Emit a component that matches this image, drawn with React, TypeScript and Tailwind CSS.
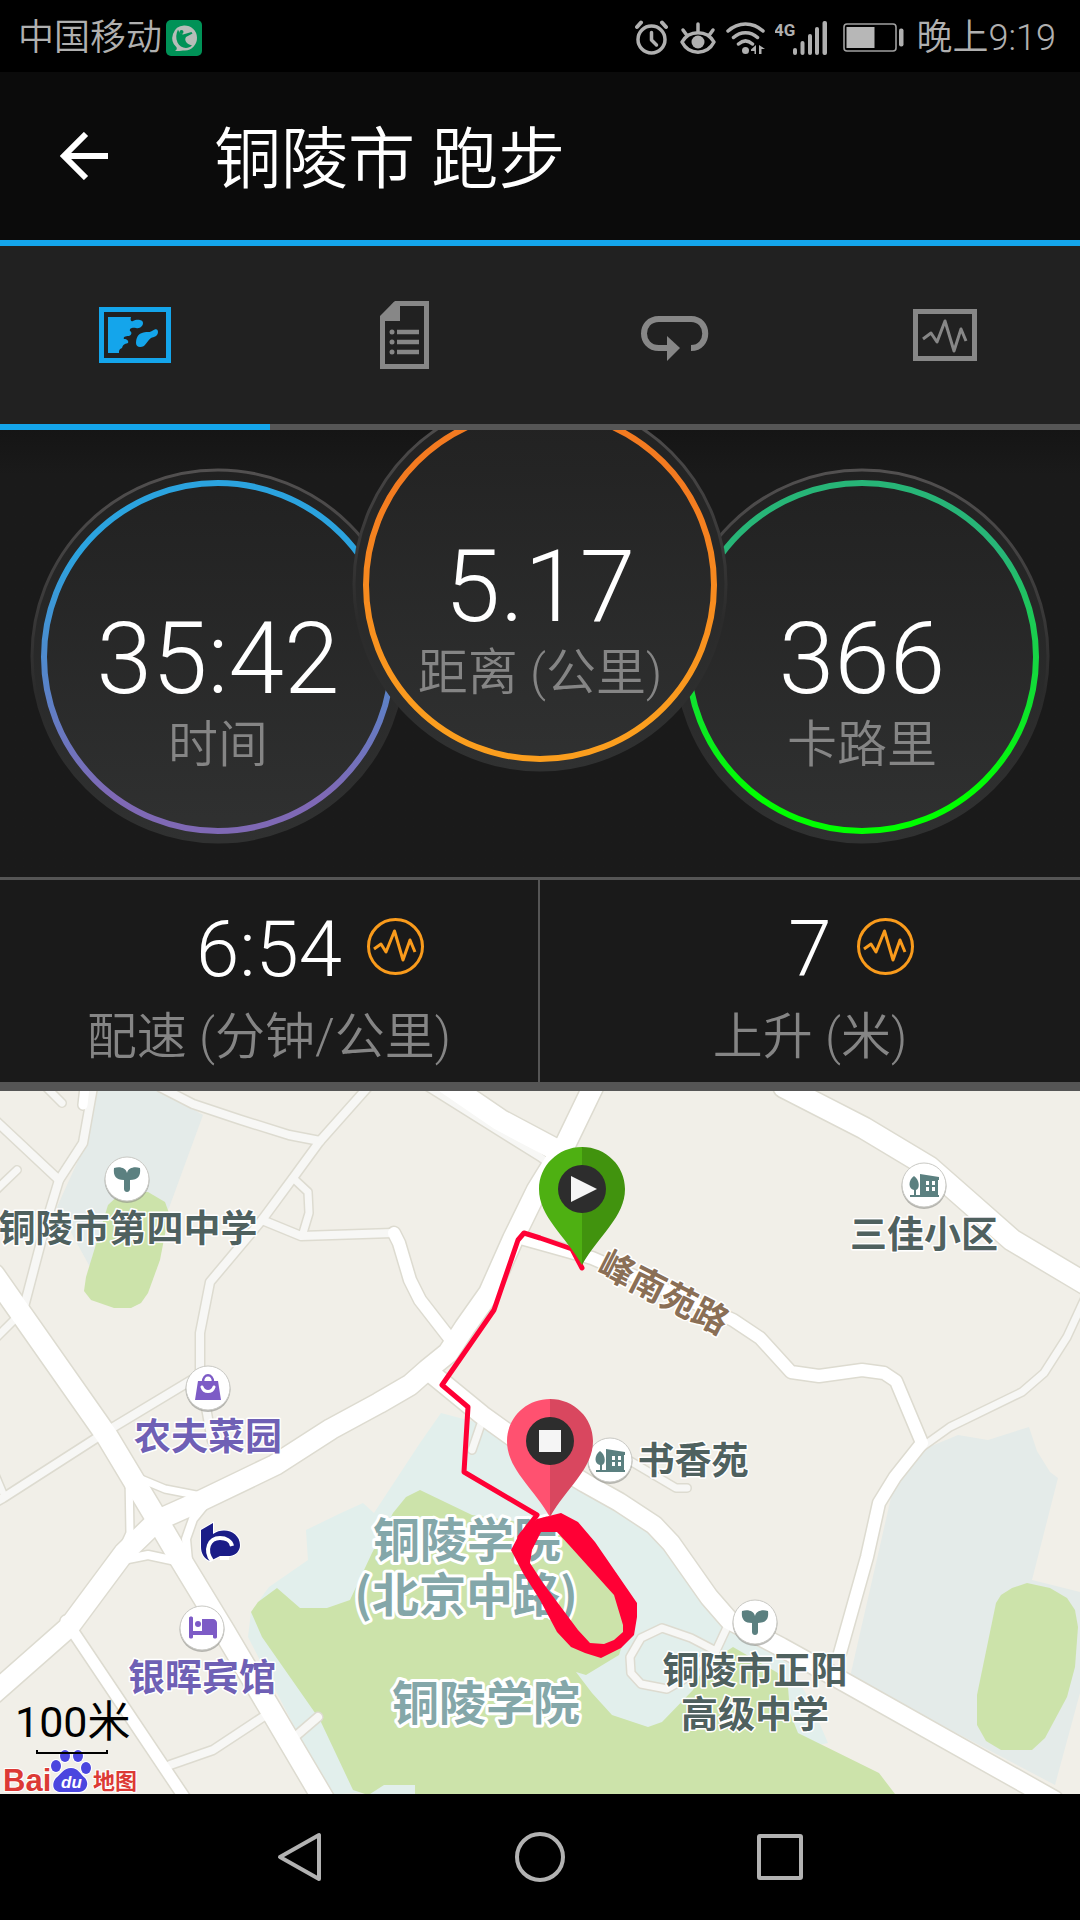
/**
 * Activity detail screen
 * Shows the totals of a run, its pace and ascent, and the route on a map
 */

import React from 'react';

/**
 * Props for a round gauge at the top of the summary
 */
interface GaugeProps {
  value: string;
  label: string;
  gradientId: string;
  from: string;
  to: string;
  className?: string;
}

/**
 * Props for a cell of the secondary stats row
 */
interface StatProps {
  value: string;
  label: string;
}

interface Road {
  points: string;
  width: number;
  minor?: boolean;
}

// Minor roads first, so that main roads are drawn over their ends
const ROADS: Road[] = [
  { points: '93,-4 83,52 59,89 46,132 24,216', width: 8, minor: true },
  { points: '-4,30 59,89', width: 8, minor: true },
  { points: '-6,101 17,79', width: 7, minor: true },
  { points: '44,-6 62,12', width: 7, minor: true },
  { points: '-4,247 18,225', width: 7, minor: true },
  { points: '160,-4 193,13 241,29 289,44 320,50', width: 8, minor: true },
  { points: '368,-4 320,50 293,87 262,129 210,191 200,242 200,285 207,322 212,350', width: 8, minor: true },
  { points: '293,87 308,101 309,122 303,142', width: 7, minor: true },
  { points: '262,129 301,145 393,142', width: 8, minor: true },
  { points: '200,284 112,337 3,407 -4,411', width: 8, minor: true },
  { points: '-4,385 4,404', width: 6, minor: true },
  { points: '1086,205 1067,246 1044,282 1022,301 950,336 922,356', width: 7, minor: true },
  { points: '620,364 676,397 687,397', width: 7, minor: true },
  { points: '729,532 715,562', width: 7, minor: true },
  { points: '716,560 691,547 662,537 641,547 630,566 631,582 641,593 667,598 688,586 704,566', width: 7, minor: true },
  { points: '482,330 472,359', width: 7, minor: true },
  { points: '170,674 213,659 266,624', width: 8, minor: true },
  { points: '290,650 318,626', width: 8, minor: true },
  { points: '428,-4 540,66 600,110', width: 7, minor: true },
  { points: '85,-4 83,14', width: 9 },
  { points: '141,388 165,398 196,404', width: 7 },
  { points: '129,385 130,442 122,460', width: 7 },
  { points: '206,412 193,428 186,448 188,470', width: 8 },
  { points: '128,468 148,464 176,470', width: 8 },
  { points: '394,142 399,152 410,189 420,209 451,249', width: 12 },
  { points: '66,530 117,606 186,709', width: 11 },
  {
    points:
      '517,146 560,158 592,167 643,189 695,212 733,229 760,247 791,281 819,285 862,279 884,282 896,290 922,352 895,386 879,412 867,466 840,562',
    width: 12,
  },
  { points: '784,-4 864,37 929,76 970,112 1012,149 1086,193', width: 21 },
  { points: '446,-8 500,29 566,64', width: 21 },
  { points: '427,279 482,324 535,362 585,392 619,411 654,434 671,452 709,506 729,529 781,556 846,592 1054,709', width: 18 },
  { points: '-6,184 107,345 152,420 179,466 224,540 275,626 324,709', width: 21 },
  {
    points:
      '594,-6 566,52 537,99 513,148 489,202 465,236 448,262 427,279 410,294 379,312 331,338 275,374 196,412 158,429 124,462 69,536 -6,602',
    width: 20,
  },
];

const TEXT_FONT = "font-['Roboto','Noto_Sans_CJK_SC',sans-serif]";

function StatusBar() {
  return (
    <div className="flex h-[72px] items-center justify-between bg-black pl-[18px] pr-6 pt-1 text-[36px] leading-none text-[#b0b0b0]">
      <div className="flex items-center gap-1">
        <span className="font-[350]">中国移动</span>
        <svg className="h-9 w-9" viewBox="0 0 36 36" aria-hidden="true">
          <rect width="36" height="36" rx="5" fill="#009257" />
          <path d="M18 5.500a12.500 12.500 0 0 1 1 25c-4 0-6 1-10 .3 2-1 2-2 1.500-3.500A12.500 12.500 0 0 1 18 5.500z" fill="#b7bdb9" />
          <path
            d="M12 9.500c1 3 3 4.500 5 5l8.500-2.500 1 1.500-6.500 3.500c-2 3 0 7 6 8.500-4 4-12 3-14.500-3-2-4-1.500-9 .5-13z"
            fill="#009257"
          />
          <circle cx="15.500" cy="12" r="2" fill="#009257" />
        </svg>
      </div>
      <div className="flex items-center gap-2.5">
        <svg className="h-9 w-9" viewBox="0 0 36 36" fill="none" stroke="#b0b0b0" strokeLinecap="round" strokeLinejoin="round" aria-hidden="true">
          <circle cx="17.500" cy="19.500" r="13.500" strokeWidth="3.500" />
          <path d="M17.500 12.500v7.500l5 5" strokeWidth="3.500" />
          <path d="M3 7l4-4.500M32 7l-4-4.500" strokeWidth="4" />
        </svg>
        <svg className="h-9 w-9" viewBox="0 0 36 36" fill="none" stroke="#b0b0b0" strokeLinecap="round" strokeLinejoin="round" aria-hidden="true">
          <path d="M2 22C9 9.500 27 9.500 34 22 27 35.500 9 35.500 2 22z" strokeWidth="3.500" />
          <circle cx="18" cy="22" r="6.500" fill="#b0b0b0" stroke="none" />
          <path d="M18 4v7M3 10l4 5.500M33 10l-4 5.500" strokeWidth="3.500" />
        </svg>
        <svg className="h-9 w-[39px]" viewBox="0 0 39 36" fill="none" stroke="#b0b0b0" strokeWidth="3.500" strokeLinecap="round" aria-hidden="true">
          <path d="M2 11C12 1.500 27 1.500 37 11M7.500 17.500c7-6.500 17-6.500 24 0M12.500 24c4.500-4 9.500-4 14 0" />
          <circle cx="19.500" cy="30.500" r="3.500" fill="#b0b0b0" stroke="none" />
          <path d="M30 25v9h-1.500v-3H25v-1.500zM33 25l6 4h-3.500v5H33z" fill="#b0b0b0" stroke="none" />
        </svg>
        <svg className="h-9 w-[58px]" viewBox="0 0 58 36" fill="#b0b0b0" aria-hidden="true">
          <text x="-1" y="16" fontSize="17" fontWeight="700">4G</text>
          <rect x="18" y="28" width="4" height="7" rx="2" />
          <rect x="25.500" y="21" width="4" height="14" rx="2" />
          <rect x="33" y="14" width="4" height="21" rx="2" />
          <rect x="40" y="7" width="4" height="28" rx="2" />
          <rect x="47.500" y="1" width="4.500" height="34" rx="2" />
        </svg>
        <svg className="h-9 w-16" viewBox="0 0 64 36" aria-hidden="true">
          <rect x="1" y="4" width="52" height="27" rx="3" fill="none" stroke="#a0a0a0" strokeWidth="1.600" />
          <rect x="3.500" y="7" width="28" height="21" fill="#b7b7b7" />
          <rect x="56" y="8.500" width="4.500" height="18" rx="2" fill="#b0b0b0" />
        </svg>
        <time className="font-[350]">晚上9:19</time>
      </div>
    </div>
  );
}

function Header() {
  return (
    <header className="flex h-[174px] items-center border-b-6 border-[#14a5eb] bg-[#0b0b0b] pl-[60px] text-white">
      <button type="button" aria-label="返回" className="h-12 w-12">
        <svg className="h-12 w-12" viewBox="0 0 48 48" fill="none" stroke="white" strokeWidth="6" aria-hidden="true">
          <path d="M48 24H4M26 2L4 24l22 22" />
        </svg>
      </button>
      <h1 className="ml-[106px] pt-2 text-[67px] font-[350] leading-none">铜陵市 跑步</h1>
    </header>
  );
}

function TabBar() {
  return (
    <nav className="grid h-[184px] grid-cols-4 bg-[#212121]">
      <button type="button" aria-label="地图" aria-current="page" className="flex items-center justify-center border-b-6 border-[#14a5eb]">
        <svg className="h-14 w-18" viewBox="0 0 72 56" aria-hidden="true">
          <rect x="2.500" y="2.500" width="67" height="51" fill="none" stroke="#14a5eb" strokeWidth="5" />
          <path
            d="M9 10h23c-1 3 0 5 2 4 3-2 10-2 10 2 0 3-3 6-7 5-3-1-7 0-6 3 2 1 2 4-1 5-4 0-6 1-5 3 3 0 5 2 4 4-4 1-5 2-6 5-3 1-3 3-3 5H9z"
            fill="#14a5eb"
          />
          <path d="M43 26c4-2 7 0 10-2 4-3 6-2 6 1 0 4-4 5-7 6-3 2-4 5-7 8-4 2-8 1-8-3 0-5 2-9 6-10z" fill="#14a5eb" />
        </svg>
      </button>
      <button type="button" aria-label="统计" className="flex items-center justify-center border-b-6 border-[#555555]">
        <svg className="h-17 w-[50px]" viewBox="0 0 50 68" aria-hidden="true">
          <path d="M16 2.500h30.500v63h-44V16z" fill="none" stroke="#878787" strokeWidth="5" />
          <path d="M14 1h6v19H1v-5z" fill="#878787" />
          <path d="M17 31h22M17 41h22M17 51h22" stroke="#878787" strokeWidth="4.500" />
          <g fill="#878787">
            <circle cx="12" cy="31" r="2.500" />
            <circle cx="12" cy="41" r="2.500" />
            <circle cx="12" cy="51" r="2.500" />
          </g>
        </svg>
      </button>
      <button type="button" aria-label="圈数" className="flex items-center justify-center border-b-6 border-[#555555]">
        <svg className="mt-1 h-12 w-17" viewBox="0 0 68 48" aria-hidden="true">
          <path d="M28 35H18C-2 35-2 6 18 6h32c19 0 19 29 0 29" fill="none" stroke="#878787" strokeWidth="6" />
          <path d="M26 23l13 12-13 13z" fill="#878787" />
        </svg>
      </button>
      <button type="button" aria-label="图表" className="flex items-center justify-center border-b-6 border-[#555555]">
        <svg className="h-13 w-16" viewBox="0 0 64 52" fill="none" stroke="#878787" aria-hidden="true">
          <rect x="2.500" y="2.500" width="59" height="47" strokeWidth="5" />
          <path d="M10 30l8-6 6 9 8-21 9 30 7-22 5 12" strokeWidth="3" strokeLinejoin="round" />
        </svg>
      </button>
    </nav>
  );
}

function Gauge({ value, label, gradientId, from, to, className = '' }: GaugeProps) {
  return (
    <div className={`relative grid h-[378px] w-[378px] shrink-0 place-items-center ${className}`}>
      <svg className="absolute inset-0 h-full w-full" viewBox="0 0 378 378" aria-hidden="true">
        <defs>
          <linearGradient id={gradientId} x1="0" y1="0" x2="0" y2="1">
            <stop offset="0.200" stopColor={from} />
            <stop offset="0.900" stopColor={to} />
          </linearGradient>
          <linearGradient id={`${gradientId}-face`} x1="0" y1="0" x2="0" y2="1">
            <stop offset="0" stopColor="#212121" />
            <stop offset="1" stopColor="#303131" />
          </linearGradient>
          <linearGradient id={`${gradientId}-rim`} x1="0" y1="0" x2="0" y2="1">
            <stop offset="0" stopColor="#525050" />
            <stop offset="0.600" stopColor="#2b2b2b" />
            <stop offset="1" stopColor="#303131" />
          </linearGradient>
        </defs>
        <circle cx="189" cy="189" r="186" fill={`url(#${gradientId}-face)`} stroke={`url(#${gradientId}-rim)`} strokeWidth="3" />
        <circle cx="189" cy="190" r="174" fill="none" stroke={`url(#${gradientId})`} strokeWidth="6" />
      </svg>
      <div className="relative flex flex-col items-center pt-[90px] font-[350]">
        <span className="text-[100px] leading-[88px] text-white">{value}</span>
        <span className="text-[50px] leading-[84px] text-[#858585]">{label}</span>
      </div>
    </div>
  );
}

function Stat({ value, label }: StatProps) {
  return (
    <div className="flex flex-col items-center pt-6 font-[350]">
      <div className="grid grid-cols-[1fr_auto_1fr] items-start gap-[25px]">
        <span />
        <span className="text-[78px] leading-[92px] text-white">{value}</span>
        <svg className="mt-3.5 h-[57px] w-[57px]" viewBox="0 0 57 57" fill="none" stroke="#f99b1c" aria-hidden="true">
          <circle cx="28.500" cy="28.500" r="27" strokeWidth="3" />
          <path d="M7 31l7-5 5 8 8.500-21 8.500 29 7-20 5 12" strokeWidth="3" strokeLinejoin="round" />
        </svg>
      </div>
      <span className="text-[50px] leading-[82px] text-[#858585]">{label}</span>
    </div>
  );
}

function Marker({ x, y, children }: { x: number; y: number; children: React.ReactNode }) {
  return (
    <g transform={`translate(${x} ${y})`}>
      <circle cy="1.500" r="22.500" fill="#8d8d88" opacity="0.600" />
      <circle r="22" fill="white" stroke="#c9c9c4" strokeWidth="1" />
      {children}
    </g>
  );
}

function SchoolMarker({ x, y }: { x: number; y: number }) {
  return (
    <Marker x={x} y={y}>
      <path d="M-13-11c6-2 12 0 13 5 1-5 7-7 13-5 1 8-2 12-10 12v9c0 4-6 4-6 0V1c-8 0-11-4-10-12z" fill="#5b8080" />
    </Marker>
  );
}

function EstateMarker({ x, y }: { x: number; y: number }) {
  return (
    <Marker x={x} y={y}>
      <path d="M-14 12v-2h4V5c-6-1-6-10 0-14 6 4 6 13 2 14v5h4v-21l19 3v3h-1v15h1v2z" fill="#5b8080" />
      <path d="M2-4h3v4H2zM8-4h3v4H8zM2 2h3v4H2zM8 2h3v4H8z" fill="white" />
    </Marker>
  );
}

function Pin({ x, y, light, dark, children }: { x: number; y: number; light: string; dark: string; children: React.ReactNode }) {
  return (
    <g transform={`translate(${x} ${y})`}>
      <path d="M0-118C-24-118-43-99-43-76-43-48-17-30 0 0z" fill={light} />
      <path d="M0-118C24-118 43-99 43-76 43-48 17-30 0 0z" fill={dark} />
      <circle cy="-76" r="24" fill="#2d2d2d" />
      {children}
    </g>
  );
}

function RouteMap() {
  return (
    <svg className="block w-full bg-[#f1efe8]" viewBox="0 0 1080 703" role="img" aria-label="路线地图">
      {/* Grounds and parks */}
      <path d="M96 0h66l41 24-34 93-79 59-33-60 29-64z" fill="#e4ebe9" />
      <path d="M108 114l14-13h26l17 10 4 11-9 47-12 33-7 10-10 5h-17l-23-8-7-9 2-14z" fill="#cce3aa" />
      <path d="M929 356l29-12 30 5 41-13 8 24 13 21 8 6-26 102 48 12v101l-25 92-205-108 45-197z" fill="#e4ebe9" />
      <path d="M996 512l5-8 11-7 15-5 23 5 17 10 8 12 3 17-3 40-8 30-22 41-13 12h-31l-15-9-9-16v-30z" fill="#cce3aa" />
      <path
        d="M441 322L490 335 585 395 619 414 654 437 709 510 729 532 790 574 810 610 828 652 700 680 340 703 334 703 296 639 248 546 251 521 269 496 308 469 306 439 341 422 363 412 374 422 420 352z"
        fill="#e2efec"
      />
      <path
        d="M420 399L472 424 555 436 600 480 630 530 619 564 586 584 576 581 592 602 612 624 648 636 662 631 693 599 704 575 733 556 778 582 788 596 790 622 798 642 879 682 895 703 365 703 353 699 320 629 262 546 251 521 258 511 277 497 300 517 327 517 350 509 372 462 393 422 406 406z"
        fill="#cce3aa"
      />
      <path d="M370 703l14-9h31v9z" fill="#e2efec" />

      {/* Roads: casings, then surfaces */}
      <g fill="none" stroke="#dddbd0" strokeLinejoin="round" strokeLinecap="round">
        {ROADS.map((road) => (
          <polyline key={road.points} points={road.points} strokeWidth={road.width + 3} />
        ))}
      </g>
      <g fill="none" strokeLinejoin="round" strokeLinecap="round">
        {ROADS.map((road) => (
          <polyline key={road.points} points={road.points} strokeWidth={road.width} stroke={road.minor ? '#f7f7f5' : '#ffffff'} />
        ))}
      </g>

      {/* Places */}
      <SchoolMarker x={127} y={88} />
      <SchoolMarker x={755} y={531} />
      <EstateMarker x={924} y={94} />
      <EstateMarker x={610} y={369} />
      <Marker x={208} y={297}>
        <path d="M-10-7h20l3 19h-26z" fill="#7d5bc6" />
        <path d="M-5-6c0-9 10-9 10 0" fill="none" stroke="#7d5bc6" strokeWidth="2.500" />
        <path d="M-6-1c2 6 10 6 12 0" fill="none" stroke="white" strokeWidth="3" strokeLinecap="round" />
      </Marker>
      <Marker x={202} y={537}>
        <path d="M-13-10c0-2 4-2 4 0V3H0V-9h11c2 0 4 2 4 4v14c0 2-4 2-4 0V7H-9v2c0 2-4 2-4 0z" fill="#7d5bc6" />
        <circle cx="-4" cy="-4" r="3" fill="#7d5bc6" />
      </Marker>
      <g transform="translate(201 432)">
        <path d="M0 7L12 0v11c12-8 27-1 27 11 0 6-4 10-10 11H19L9 38C3 36 0 30 0 24z" fill="#1a1c87" stroke="white" strokeWidth="2" paintOrder="stroke" />
        <path d="M11 38C3 27 8 15 19 15c6 0 11 3 12 8M19 35h9" fill="none" stroke="white" strokeWidth="4" />
        <circle cx="18" cy="26" r="6.500" fill="#1a1c87" />
        <path d="M18 27h17" stroke="#1a1c87" strokeWidth="3" />
      </g>

      {/* Place names */}
      <g
        className="font-['Noto_Sans_CJK_SC',sans-serif] font-bold"
        fontSize="37"
        textAnchor="middle"
        stroke="#ffffff"
        strokeWidth="3"
        strokeLinejoin="round"
        paintOrder="stroke"
      >
        <g fill="#4f615f">
          <text x="128" y="151">铜陵市第四中学</text>
          <text x="924" y="157">三佳小区</text>
          <text x="693" y="383">书香苑</text>
          <text x="755" y="593">铜陵市正阳</text>
          <text x="755" y="637">高级中学</text>
        </g>
        <g fill="#6f60b5">
          <text x="208" y="359">农夫菜园</text>
          <text x="202" y="600">银晖宾馆</text>
        </g>
        <g fill="#84a7a9" fontSize="47" strokeWidth="6">
          <text x="467" y="466">铜陵学院</text>
          <text x="466" y="521">(北京中路)</text>
          <text x="486" y="629">铜陵学院</text>
        </g>
        <text transform="translate(664 201) rotate(27)" y="13" fontSize="35" fill="#8a6f56">峰南苑路</text>
      </g>

      {/* Recorded route */}
      <polyline
        points="582,177 572,158 540,147 524,142 518,149 494,219 442,294 468,316 464,381 537,424 520,446"
        fill="none"
        stroke="#ff0035"
        strokeWidth="5"
        strokeLinejoin="round"
        strokeLinecap="round"
      />
      <path
        d="M537 428L545 426 561 422 578 431 595 451 637 512 637 526 634 544 621 557 601 567 585 562 571 556 557 541 540 509 523 482 511 459 520 442zM541 441L532 459 530 472 543 492 578 539 590 552 604 553 614 549 623 541 623 534 614 504 569 454 557 441z"
        fill="#ff0035"
        fillRule="evenodd"
      />
      <Pin x={582} y={174} light="#4eb012" dark="#41930e">
        <path d="M-11-89L15-76l-26 13z" fill="#f5f5f5" />
      </Pin>
      <Pin x={550} y={426} light="#ff5170" dark="#d9475f">
        <path d="M-11-87h22v22h-22z" fill="#f5f5f5" />
      </Pin>

      {/* Map provider and scale */}
      <g className="font-['Liberation_Sans','Noto_Sans_CJK_SC',sans-serif] font-bold" stroke="white" strokeWidth="2" paintOrder="stroke">
        <text x="3" y="700" fontSize="31" fill="#dc3a35">Bai</text>
        <text x="93" y="698" fontSize="22" fill="#dc3a35">地图</text>
        <g fill="#4b46df">
          <ellipse cx="56" cy="675" rx="5" ry="6" />
          <ellipse cx="65" cy="665" rx="5" ry="6" />
          <ellipse cx="78" cy="665" rx="5" ry="6" />
          <ellipse cx="86" cy="677" rx="5" ry="6" />
          <path d="M71 677c7 0 9 6 14 10 5 6 1 14-6 14H61c-8 0-10-8-5-14 5-4 8-10 15-10z" />
        </g>
        <text x="61" y="697" fontSize="17" fontStyle="italic" fill="white" stroke="none">du</text>
      </g>
      <text x="15" y="646" fontSize="43" fill="black">100米</text>
      <path d="M37 659v3h70v-3" fill="none" stroke="black" strokeWidth="2" />
    </svg>
  );
}

function SystemNav() {
  return (
    <nav className="grid h-[126px] grid-cols-3 bg-black px-[180px]">
      <button type="button" aria-label="后退" className="flex items-center justify-center">
        <svg className="h-[50px] w-[50px]" viewBox="0 0 50 50" fill="none" stroke="#b2b2b2" strokeWidth="4" strokeLinejoin="round" aria-hidden="true">
          <path d="M44 3v44L5 25z" />
        </svg>
      </button>
      <button type="button" aria-label="主屏幕" className="flex items-center justify-center">
        <svg className="h-[50px] w-[50px]" viewBox="0 0 50 50" fill="none" stroke="#b2b2b2" strokeWidth="4" aria-hidden="true">
          <circle cx="25" cy="25" r="23" />
        </svg>
      </button>
      <button type="button" aria-label="最近任务" className="flex items-center justify-center">
        <svg className="h-[50px] w-[50px]" viewBox="0 0 50 50" fill="none" stroke="#b2b2b2" strokeWidth="4" strokeLinejoin="round" aria-hidden="true">
          <rect x="4" y="4" width="42" height="42" rx="1" />
        </svg>
      </button>
    </nav>
  );
}

/**
 * Activity screen component
 */
export default function App() {
  return (
    <div className={`flex min-h-screen flex-col bg-black ${TEXT_FONT}`}>
      <StatusBar />
      <Header />
      <TabBar />
      <main className="bg-[#1a1a1a]">
        {/* Totals, with the middle gauge raised over its neighbours */}
        <section className="flex h-[447px] items-start justify-center overflow-hidden bg-linear-to-b from-[#151515] to-[#1a1a1a] to-10% pt-[37px]">
          <Gauge value="35:42" label="时间" gradientId="time" from="#2ba3df" to="#7f69b5" />
          <Gauge value="5.17" label="距离 (公里)" gradientId="distance" from="#f37a20" to="#fb9e1e" className="z-10 -mx-14 -mt-18" />
          <Gauge value="366" label="卡路里" gradientId="calories" from="#27b577" to="#00ff00" />
        </section>
        <section className="grid h-[214px] grid-cols-2 divide-x-2 divide-[#555555] border-b-9 border-t-3 border-[#555555]">
          <Stat value="6:54" label="配速 (分钟/公里)" />
          <Stat value="7" label="上升 (米)" />
        </section>
        <RouteMap />
      </main>
      <SystemNav />
    </div>
  );
}
